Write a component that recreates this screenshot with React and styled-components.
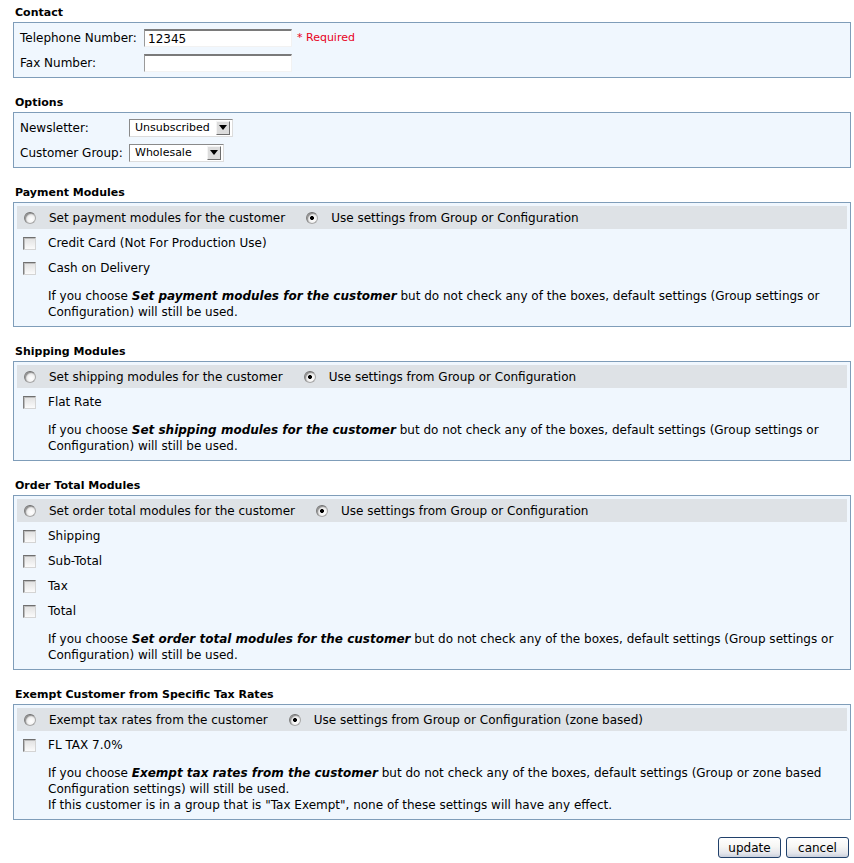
import styled, { createGlobalStyle } from 'styled-components';

const GlobalStyle = createGlobalStyle`
  body {
    margin: 0;
    background: #fff;
    color: #000;
    font-family: "DejaVu Sans", Verdana, sans-serif;
    font-size: 12px;
  }
`;

const modules = [
  {
    title: 'Payment Modules',
    setLabel: 'Set payment modules for the customer',
    useLabel: 'Use settings from Group or Configuration',
    items: ['Credit Card (Not For Production Use)', 'Cash on Delivery'],
    lead: 'Set payment modules for the customer',
    tail: 'but do not check any of the boxes, default settings (Group settings or',
    rest: ['Configuration) will still be used.'],
  },
  {
    title: 'Shipping Modules',
    setLabel: 'Set shipping modules for the customer',
    useLabel: 'Use settings from Group or Configuration',
    items: ['Flat Rate'],
    lead: 'Set shipping modules for the customer',
    tail: 'but do not check any of the boxes, default settings (Group settings or',
    rest: ['Configuration) will still be used.'],
  },
  {
    title: 'Order Total Modules',
    setLabel: 'Set order total modules for the customer',
    useLabel: 'Use settings from Group or Configuration',
    items: ['Shipping', 'Sub-Total', 'Tax', 'Total'],
    lead: 'Set order total modules for the customer',
    tail: 'but do not check any of the boxes, default settings (Group settings or',
    rest: ['Configuration) will still be used.'],
  },
  {
    title: 'Exempt Customer from Specific Tax Rates',
    setLabel: 'Exempt tax rates from the customer',
    useLabel: 'Use settings from Group or Configuration (zone based)',
    items: ['FL TAX 7.0%'],
    lead: 'Exempt tax rates from the customer',
    tail: 'but do not check any of the boxes, default settings (Group or zone based',
    rest: [
      'Configuration settings) will still be used.',
      'If this customer is in a group that is "Tax Exempt", none of these settings will have any effect.',
    ],
  },
];

export default function App() {
  return (
    <>
      <GlobalStyle />
      <Page>
        <Section>
          <Heading>Contact</Heading>
          <Panel>
            <FieldGrid $labelWidth={124}>
              <Label>Telephone Number:</Label>
              <TextInput defaultValue="12345" />
              <Required>* Required</Required>
              <Label>Fax Number:</Label>
              <TextInput defaultValue="" />
              <span />
            </FieldGrid>
          </Panel>
        </Section>

        <Section>
          <Heading>Options</Heading>
          <Panel>
            <FieldGrid $labelWidth={109}>
              <Label>Newsletter:</Label>
              <SelectWrap $width={104}>
                <Select defaultValue="0">
                  <option value="0">Unsubscribed</option>
                  <option value="1">Subscribed</option>
                </Select>
                <Arrow />
              </SelectWrap>
              <span />
              <Label>Customer Group:</Label>
              <SelectWrap $width={95}>
                <Select defaultValue="w">
                  <option value="w">Wholesale</option>
                  <option value="r">Retail</option>
                </Select>
                <Arrow />
              </SelectWrap>
              <span />
            </FieldGrid>
          </Panel>
        </Section>

        {modules.map((m) => (
          <Section key={m.title}>
            <Heading>{m.title}</Heading>
            <Panel>
              <ChoiceBar>
                <Radio name={m.title} />
                <ChoiceText>{m.setLabel}</ChoiceText>
                <Radio name={m.title} defaultChecked />
                <ChoiceText>{m.useLabel}</ChoiceText>
              </ChoiceBar>
              {m.items.map((item) => (
                <ChoiceRow key={item}>
                  <Check />
                  <span>{item}</span>
                </ChoiceRow>
              ))}
              <Note>
                If you choose <b><i>{m.lead}</i></b> {m.tail}
                {m.rest.map((line) => (
                  <span key={line}>
                    <br />
                    {line}
                  </span>
                ))}
              </Note>
            </Panel>
          </Section>
        ))}

        <Actions>
          <Button>update</Button>
          <Button>cancel</Button>
        </Actions>
      </Page>
    </>
  );
}

const Page = styled.div`
  width: 838px;
  padding: 5px 0 6px 13px;
`;

const Section = styled.div`
  margin-bottom: 17px;
`;

const Heading = styled.div`
  font-size: 11px;
  font-weight: bold;
  line-height: 15px;
  padding-left: 2px;
  margin-bottom: 2px;
`;

const Panel = styled.div`
  border: 1px solid #7f9db9;
  background: #f0f7fe;
  padding: 3px;
`;

const FieldGrid = styled.div`
  display: grid;
  grid-template-columns: ${(p) => p.$labelWidth}px auto 1fr;
  grid-auto-rows: 23px;
  row-gap: 2px;
  align-items: center;
  padding-left: 3px;
`;

const Label = styled.span`
  white-space: nowrap;
`;

const TextInput = styled.input`
  box-sizing: border-box;
  width: 148px;
  height: 18px;
  padding: 1px 3px 0;
  border-style: solid;
  border-width: 2px 1px 1px 1px;
  border-color: #7a7a7a #f2f2f2 #f2f2f2 #9a9a9a;
  background: #fff;
  font: 12px "DejaVu Sans", Verdana, sans-serif;
  color: #000;
  outline: none;
`;

const Required = styled.span`
  color: #e8001c;
  font-size: 11px;
  margin-left: 5px;
`;

const SelectWrap = styled.span`
  position: relative;
  display: inline-block;
  width: ${(p) => p.$width}px;
  height: 18px;
`;

const Select = styled.select`
  appearance: none;
  box-sizing: border-box;
  width: 100%;
  height: 18px;
  padding: 0 16px 0 5px;
  border-style: solid;
  border-width: 1px;
  border-color: #8a8a8a #dcdcdc #dcdcdc #8a8a8a;
  border-radius: 0;
  background: #fff;
  font: 11px "DejaVu Sans", Verdana, sans-serif;
  color: #000;
  outline: none;
`;

const Arrow = styled.span`
  position: absolute;
  right: 3px;
  top: 2px;
  width: 12px;
  height: 12px;
  background: #dcdcdc;
  border-style: solid;
  border-width: 1px;
  border-color: #f4f4f4 #6e6e6e #6e6e6e #f4f4f4;
  pointer-events: none;
  &::after {
    content: '';
    position: absolute;
    left: 2px;
    top: 3px;
    border-style: solid;
    border-width: 5px 4px 0 4px;
    border-color: #000 transparent transparent transparent;
  }
`;

const ChoiceBar = styled.div`
  display: flex;
  align-items: center;
  height: 23px;
  margin-bottom: 2px;
  background: #dee2e6;
`;

const ChoiceRow = styled.label`
  display: flex;
  align-items: center;
  height: 23px;
  margin-bottom: 2px;
`;

const ChoiceText = styled.span`
  margin-right: 14px;
  white-space: nowrap;
`;

const Radio = styled.input.attrs({ type: 'radio' })`
  appearance: none;
  box-sizing: border-box;
  width: 12px;
  height: 12px;
  margin: 0 13px 0 7px;
  border: 1px solid #a8a8a8;
  border-top-color: #6f6f6f;
  border-left-color: #7e7e7e;
  border-radius: 50%;
  background: radial-gradient(circle at 62% 64%, #ffffff 0, #f2f2f2 40%, #bdbdbd 100%);
  box-shadow: inset 1px 1px 1px rgba(0, 0, 0, 0.35);
  &:checked {
    background: radial-gradient(circle at 50% 50%, #000 0, #000 1.6px, transparent 2.3px),
      radial-gradient(circle at 62% 64%, #ffffff 0, #f2f2f2 40%, #bdbdbd 100%);
  }
`;

const Check = styled.input.attrs({ type: 'checkbox' })`
  appearance: none;
  box-sizing: border-box;
  width: 13px;
  height: 13px;
  margin: 1px 12px 0 6px;
  border-style: solid;
  border-width: 1px;
  border-color: #6f6f6f #d4d4d4 #d4d4d4 #808080;
  border-radius: 0;
  background: linear-gradient(#e0e0e0, #fbfbfb);
  box-shadow: inset 1px 1px 0 #bcbcbc;
`;

const Note = styled.p`
  margin: 9px 0 3px 31px;
  line-height: 16px;
  white-space: nowrap;
`;

const Actions = styled.div`
  display: flex;
  justify-content: flex-end;
  gap: 5px;
  padding-right: 2px;
`;

const Button = styled.button`
  box-sizing: border-box;
  width: 63px;
  height: 21px;
  padding: 0;
  border: 1px solid #21416b;
  border-radius: 3px;
  background: linear-gradient(#ffffff 0%, #f6f6f4 45%, #e4e6ec 80%, #c9cfdb 100%);
  font: 12px "DejaVu Sans", Tahoma, sans-serif;
  color: #000;
`;
